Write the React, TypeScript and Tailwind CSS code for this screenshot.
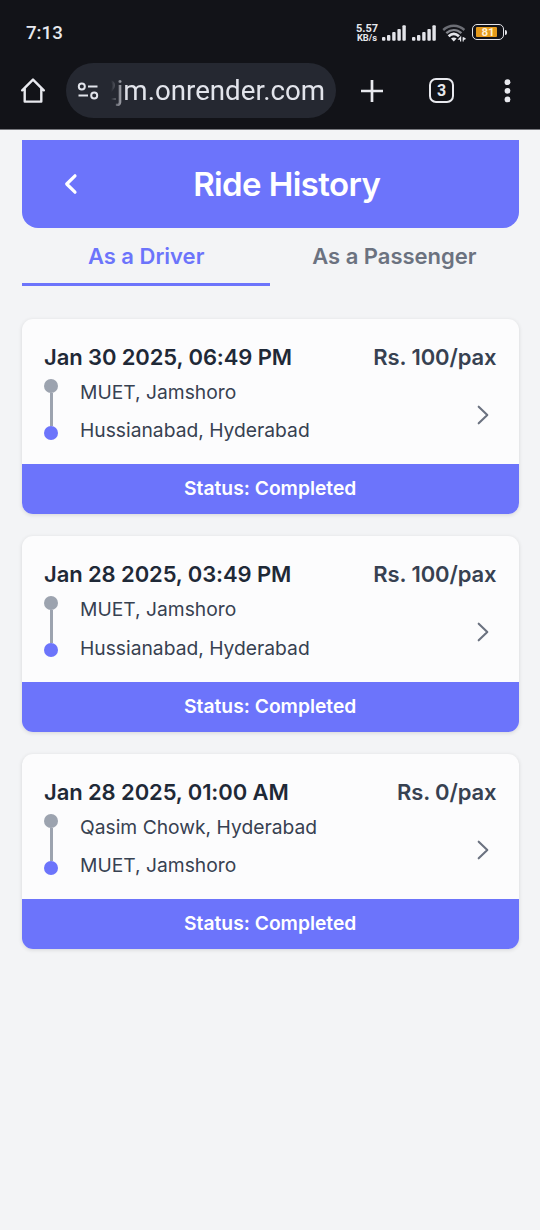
import { useState } from "react";

interface Ride {
  date: string;
  price: string;
  from: string;
  to: string;
  status: string;
}

const rides: Ride[] = [
  {
    date: "Jan 30 2025, 06:49 PM",
    price: "Rs. 100/pax",
    from: "MUET, Jamshoro",
    to: "Hussianabad, Hyderabad",
    status: "Completed",
  },
  {
    date: "Jan 28 2025, 03:49 PM",
    price: "Rs. 100/pax",
    from: "MUET, Jamshoro",
    to: "Hussianabad, Hyderabad",
    status: "Completed",
  },
  {
    date: "Jan 28 2025, 01:00 AM",
    price: "Rs. 0/pax",
    from: "Qasim Chowk, Hyderabad",
    to: "MUET, Jamshoro",
    status: "Completed",
  },
];

const tabs = ["As a Driver", "As a Passenger"];

function SignalIcon() {
  return (
    <svg className="w-6 h-4 shrink-0" viewBox="0 0 24 16" fill="#e4e5ea">
      <rect x="0" y="12" width="3.4" height="3.7" rx="1" />
      <rect x="5" y="10" width="3.4" height="5.7" rx="1" />
      <rect x="10.2" y="7" width="3.4" height="8.7" rx="1" />
      <rect x="15.4" y="4" width="3.4" height="11.7" rx="1" />
      <rect x="20.4" y="0.3" width="3.4" height="15.4" rx="1" />
    </svg>
  );
}

function WifiIcon() {
  return (
    <svg className="w-6 h-[18px] shrink-0" viewBox="0 0 24 18" fill="none">
      <path d="M1.2 6C7.3.4 16.3.4 22.4 6" stroke="#6b6d74" strokeWidth="2.4" />
      <path d="M4.3 9.2C9 5.1 14.8 5.1 19.4 9.2" stroke="#83858c" strokeWidth="2.4" />
      <path d="M6.6 12.2c3.2-2.9 7.2-2.9 10.4 0" stroke="#e4e5ea" strokeWidth="2.7" />
      <path d="M9 14.6c1.6-1.5 4-1.5 5.6 0L11.8 17.6z" fill="#e4e5ea" />
      <path d="M18.6 17.4v-4.2l-1.8 2h1.8M21.2 13.2v4.2M21.2 13.6l1.8 1.2-1.8.8" stroke="#e4e5ea" strokeWidth="1.2" />
    </svg>
  );
}

function StatusBar() {
  return (
    <div className="flex items-center h-[63px] pl-[26px] pr-[33px] pt-[2px] text-[#e8e9ee]">
      <span className="pt-px text-[18.7px] font-medium leading-none">7:13</span>
      <div className="ml-auto flex items-center">
        <div className="w-[22px] pt-px text-center font-bold">
          <div className="text-[11px] leading-[9px]">5.57</div>
          <div className="text-[9.3px] leading-[9px]">KB/s</div>
        </div>
        <div className="flex items-center ml-[4px] gap-[6px]">
          <SignalIcon />
          <SignalIcon />
          <WifiIcon />
        </div>
        <div className="flex items-center ml-[6px] pb-px">
          <div className="w-8 h-4 rounded-[5px] border-[1.8px] border-[#e4e5ea] p-[2px]">
            <div className="w-[21px] h-[10px] mx-[1px] bg-[#e59a1b] rounded-[1px] text-[11.5px] font-bold leading-[10px] text-center pl-[3px] text-[#fdf0d5]">
              81
            </div>
          </div>
          <div className="w-[2px] h-[5px] ml-[1px] rounded-r bg-[#e4e5ea]" />
        </div>
      </div>
    </div>
  );
}

function BrowserBar() {
  return (
    <div className="flex items-start h-[66px]">
      <svg className="w-[26px] h-[26px] ml-5 mt-[15px] shrink-0" viewBox="0 0 26 26" fill="none" stroke="#e8e9ee" strokeWidth="2.4" strokeLinejoin="round" strokeLinecap="round">
        <path d="M2.2 12.3 13 1.6l10.8 10.7M4.7 10.2v13.4h16.6V10.2" />
      </svg>
      <div className="flex items-center w-[270px] h-[55px] ml-5 pl-[11px] rounded-full bg-[#252831] overflow-hidden shrink-0">
        <svg className="w-[22px] h-[18px] shrink-0" viewBox="0 0 22 18" fill="none" stroke="#e2e4eb" strokeWidth="2">
          <circle cx="4.8" cy="4.4" r="3" />
          <path d="M11 4.4h9.5M1.5 13.4H11" />
          <circle cx="17.2" cy="13.4" r="3" />
        </svg>
        <div className="flex justify-end w-[214px] ml-[12px] mt-px h-9 overflow-hidden whitespace-nowrap text-[27.7px] leading-9 text-[#e2e4eb] [mask-image:linear-gradient(to_right,transparent,black_16px)]">
          2jm.onrender.com
        </div>
      </div>
      <svg className="w-[22px] h-[22px] ml-[25px] mt-[17px] shrink-0" viewBox="0 0 22 22" stroke="#e8e9ee" strokeWidth="2.7">
        <path d="M11 0v22M0 11h22" />
      </svg>
      <div className="flex items-center justify-center w-[25px] h-[25px] ml-[46px] mt-[15px] rounded-[7px] border-[2.8px] border-[#e8e9ee] text-[#e8e9ee] text-[16px] leading-none font-bold shrink-0">
        3
      </div>
      <svg className="w-[7px] h-6 ml-[49.5px] mt-4 shrink-0" viewBox="0 0 7 24" fill="#e8e9ee">
        <circle cx="3.5" cy="3.2" r="2.9" />
        <circle cx="3.5" cy="11.8" r="2.9" />
        <circle cx="3.5" cy="20.4" r="2.9" />
      </svg>
    </div>
  );
}

function RideCard({ ride }: { ride: Ride }) {
  return (
    <div className="rounded-[11px] bg-[#fcfcfd] overflow-hidden shadow-[0_1px_4px_rgba(0,0,0,0.12)]">
      <div className="h-[145.4px] px-[22px] pt-[22px]">
        <div className="flex justify-between text-[22px] leading-[33px] tracking-[-0.1px] font-semibold">
          <h2 className="text-[#1f2937]">{ride.date}</h2>
          <span className="text-[#374151]">{ride.price}</span>
        </div>
        <div className="flex">
          <div className="flex flex-col items-center w-[14px] pt-[5px] shrink-0">
            <div className="w-[14px] h-[14px] rounded-full bg-[#9ca3af]" />
            <div className="w-[3px] h-[33px] bg-[#9ca3af]" />
            <div className="w-[14px] h-[14px] rounded-full bg-[#6c74fb]" />
          </div>
          <div className="ml-[22px] pt-[5px] text-[19.25px] leading-[27.5px] text-[#374151]">
            <p>{ride.from}</p>
            <p className="mt-[11px]">{ride.to}</p>
          </div>
          <svg className="w-[12px] h-[20px] ml-auto mr-[7.5px] mt-[31px] shrink-0" viewBox="0 0 12 20" fill="none" stroke="#6b7280" strokeWidth="2.1" strokeLinecap="round" strokeLinejoin="round">
            <path d="m1.7 1.7 8.6 8.3-8.6 8.3" />
          </svg>
        </div>
      </div>
      <div className="h-[49.8px] bg-[#6c74fb] text-center text-[19.25px] leading-[48.8px] font-semibold text-white">
        Status: {ride.status}
      </div>
    </div>
  );
}

export default function App() {
  const [active, setActive] = useState(0);

  return (
    <div className="w-[540px] h-[1230px] bg-[#f3f4f6] overflow-hidden font-['Inter',sans-serif]">
      <div className="bg-[#121318] border-b border-[#77787d] h-[130px] font-['Roboto',sans-serif]">
        <StatusBar />
        <BrowserBar />
      </div>

      <main className="pt-[10px] pl-[22px] pr-[21.5px]">
        <header className="flex items-center h-[88px] rounded-b-2xl bg-[#6c74fb] text-white">
          <button className="ml-[41px] w-4" aria-label="Back">
            <svg className="w-4 h-[22px]" viewBox="0 0 16 22" fill="none" stroke="currentColor" strokeWidth="3.2" strokeLinecap="round" strokeLinejoin="round">
              <path d="M12 2.8 3.7 11l8.3 8.2" />
            </svg>
          </button>
          <h1 className="flex-1 pr-[24px] text-center text-[33px] leading-[44px] tracking-[-0.6px] font-semibold">
            Ride History
          </h1>
        </header>

        <nav className="flex h-[58px]">
          {tabs.map((tab, i) => (
            <button
              key={tab}
              onClick={() => setActive(i)}
              className={
                i === active
                  ? "flex-1 text-[22px] leading-[33px] pt-[1px] font-semibold text-[#6c74fb] border-b-[3px] border-[#6c74fb]"
                  : "flex-1 text-[22px] leading-[33px] pt-[1px] font-semibold text-[#6b7280] border-b-[3px] border-transparent"
              }
            >
              {tab}
            </button>
          ))}
        </nav>

        <div className="mt-[32.9px] flex flex-col gap-[22.3px]">
          {rides.map((ride) => (
            <RideCard key={ride.date} ride={ride} />
          ))}
        </div>
      </main>
    </div>
  );
}
